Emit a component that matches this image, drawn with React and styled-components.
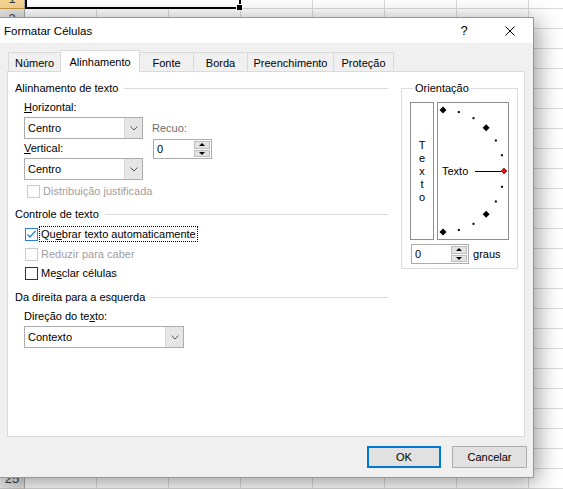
import React from 'react'
import styled, { createGlobalStyle } from 'styled-components'

const UI_FONT = '"Liberation Sans", Arial, sans-serif'

const GlobalStyle = createGlobalStyle`
  html, body {
    margin: 0;
    padding: 0;
    background: #fff;
    overflow: hidden;
  }
  body {
    font-family: ${UI_FONT};
    font-size: 11px;
    color: #000;
  }
`

const Screen = styled.div`
  position: relative;
  width: 563px;
  height: 489px;
  overflow: hidden;
  background: #fff;
`

/* spreadsheet behind the dialog */

const Sheet = styled.div`
  display: flex;
  flex-direction: column;
  margin-top: -11px;
`

const SheetRow = styled.div`
  display: grid;
  grid-template-columns: 25px repeat(8, 72px);
  height: 20px;
  flex: none;
`

const RowHead = styled.div`
  display: flex;
  align-items: center;
  justify-content: center;
  box-sizing: border-box;
  background: ${p => (p.$active ? '#f6d592' : '#e3e3e3')};
  border-right: 1px solid #ababab;
  border-bottom: 1px solid ${p => (p.$active ? '#c79b43' : '#c9c9c9')};
  color: #3a3a3a;
  font-size: 13px;
`

const Cell = styled.div`
  box-sizing: border-box;
  border-right: 1px solid #dadada;
  border-bottom: 1px solid #dadada;
`

const ActiveCell = styled.div`
  grid-column: span 3;
  position: relative;
  box-sizing: border-box;
  border: 2px solid #000;
`

const FillHandle = styled.span`
  position: absolute;
  right: -4px;
  bottom: -4px;
  width: 5px;
  height: 5px;
  background: #000;
  border: 1px solid #fff;
`

/* dialog */

const Dialog = styled.div`
  position: absolute;
  left: -2px;
  top: 17px;
  width: 536px;
  height: 461px;
  box-sizing: border-box;
  display: flex;
  flex-direction: column;
  border: 1px solid #5aa7e0;
  background: #f0f0f0;
  box-shadow: 3px 4px 22px rgba(0, 0, 0, 0.42);
`

const TitleBar = styled.div`
  display: flex;
  align-items: center;
  height: 25px;
  flex: none;
  background: #fff;
`

const Title = styled.div`
  flex: 1;
  padding-left: 5px;
  font-size: 11.5px;
`

const TitleButton = styled.div`
  width: 46px;
  height: 25px;
  display: flex;
  align-items: center;
  justify-content: center;
  font-size: 13px;
`

const Body = styled.div`
  flex: 1;
  display: flex;
  flex-direction: column;
  padding: 7px 6px 0 8px;
`

const TabStrip = styled.div`
  display: flex;
  align-items: flex-end;
  height: 21px;
  padding-left: 1px;
`

const Tab = styled.div`
  position: relative;
  z-index: ${p => (p.$active ? 1 : 0)};
  box-sizing: border-box;
  width: ${p => p.$w + 1}px;
  height: ${p => (p.$active ? 22 : 19)}px;
  margin-bottom: ${p => (p.$active ? -1 : 0)}px;
  margin-left: -1px;
  padding-top: ${p => (p.$active ? 0 : 2)}px;
  display: flex;
  align-items: center;
  justify-content: center;
  border: 1px solid #d9d9d9;
  border-bottom: none;
  background: ${p => (p.$active ? '#fff' : '#f0f0f0')};

  &:first-child {
    margin-left: 0;
  }
`

const Panel = styled.div`
  box-sizing: border-box;
  width: 518px;
  height: 366px;
  display: flex;
  align-items: flex-start;
  padding: 8px 0 0 7px;
  border: 1px solid #d9d9d9;
  background: #fff;
`

const ButtonRow = styled.div`
  display: flex;
  justify-content: flex-end;
  gap: 11px;
  margin-top: 9px;
`

const Button = styled.div`
  box-sizing: border-box;
  width: ${p => p.$w}px;
  height: 22px;
  display: flex;
  align-items: center;
  justify-content: center;
  background: #e1e1e1;
  border: ${p => (p.$primary ? '2px solid #0078d7' : '1px solid #adadad')};
`

/* left column of the Alinhamento tab */

const LeftCol = styled.div`
  width: 373px;
  display: flex;
  flex-direction: column;
`

const SectionHead = styled.div`
  display: flex;
  align-items: center;
  height: 16px;
  margin-top: ${p => p.$mt || 0}px;
  white-space: nowrap;

  &::after {
    content: '';
    flex: 1;
    height: 1px;
    margin-left: 6px;
    background: #dcdcdc;
  }
`

const Indent = styled.div`
  display: flex;
  flex-direction: column;
  padding-left: 9px;
`

const AlignGrid = styled.div`
  display: flex;
  align-items: flex-start;
`

const Stack = styled.div`
  display: flex;
  flex-direction: column;
  margin-left: ${p => p.$ml || 0}px;
`

const FieldLabel = styled.div`
  height: 16px;
  line-height: 16px;
  margin-top: ${p => p.$mt || 0}px;
  color: ${p => (p.$muted ? '#6d6d6d' : '#000')};
  white-space: nowrap;
`

const SelectBox = styled.div`
  box-sizing: border-box;
  width: ${p => p.$w}px;
  height: 22px;
  margin-top: 2px;
  display: flex;
  border: 1px solid #acacac;
  background: #fff;
`

const SelectValue = styled.span`
  flex: 1;
  display: flex;
  align-items: center;
  padding-left: 3px;
`

const DropButton = styled.span`
  width: 17px;
  display: flex;
  align-items: center;
  justify-content: center;
  background: #e6e6e6;
  border-left: 1px solid #d6d6d6;
`

const SpinBox = styled.div`
  box-sizing: border-box;
  width: ${p => p.$w}px;
  height: 20px;
  margin-top: ${p => p.$mt || 0}px;
  margin-left: 1px;
  display: flex;
  border: 1px solid #acacac;
  background: #fff;
`

const SpinValue = styled.span`
  flex: 1;
  display: flex;
  align-items: center;
  padding-left: 3px;
`

const SpinButtons = styled.span`
  width: 16px;
  margin: 1px;
  display: flex;
  flex-direction: column;
  gap: 1px;
`

const SpinButton = styled.span`
  flex: 1;
  display: flex;
  align-items: center;
  justify-content: center;
  background: #e3e3e3;
  border: 1px solid #bdbdbd;

  &::before {
    content: '';
    border-left: 3px solid transparent;
    border-right: 3px solid transparent;
    ${p => (p.$down ? 'border-top: 3px solid #000;' : 'border-bottom: 3px solid #000;')}
  }
`

const CheckRow = styled.div`
  display: flex;
  align-items: center;
  height: 16px;
  margin-top: ${p => p.$mt || 0}px;
  margin-left: ${p => p.$ml ?? 1}px;
  color: ${p => (p.$disabled ? '#a0a0a0' : '#000')};
  white-space: nowrap;
`

const Box = styled.span`
  box-sizing: border-box;
  width: 13px;
  height: 13px;
  flex: none;
  margin-right: 1px;
  display: flex;
  align-items: center;
  justify-content: center;
  background: #fff;
  border: 1px solid
    ${p => (p.$disabled ? '#cccccc' : p.$checked ? '#2c7fd2' : '#333333')};
`

const CheckText = styled.span`
  padding: 0 1px;
  line-height: 14px;
  border: 1px dotted ${p => (p.$focus ? '#000' : 'transparent')};
`

/* orientation group */

const OrientBox = styled.fieldset`
  box-sizing: border-box;
  width: 117px;
  min-width: 0;
  margin: 0 0 0 13px;
  padding: 0 8px 4px 8px;
  border: 1px solid #dcdcdc;
`

const OrientLegend = styled.legend`
  padding: 0 2px;
  margin-left: 3px;
  line-height: 16px;
`

const Dial = styled.div`
  display: flex;
  gap: 3px;
  margin-top: 6px;
`

const VerticalText = styled.div`
  box-sizing: border-box;
  width: 24px;
  height: 138px;
  display: flex;
  flex-direction: column;
  align-items: center;
  justify-content: center;
  line-height: 13px;
  border: 1px solid #8e8e8e;
`

const ArcBox = styled.div`
  box-sizing: border-box;
  width: 72px;
  height: 138px;
  border: 1px solid #8e8e8e;

  svg {
    display: block;
  }
`

const DegreeRow = styled.div`
  display: flex;
  align-items: center;
  margin-top: 4px;
`

const Unit = styled.span`
  margin-left: 4px;
`

function Chevron() {
  return (
    <svg width="8" height="5" viewBox="0 0 8 5">
      <polyline points="0.5,0.5 4,4 7.5,0.5" fill="none" stroke="#555" strokeWidth="1" />
    </svg>
  )
}

function Select({ value, width }) {
  return (
    <SelectBox $w={width}>
      <SelectValue>{value}</SelectValue>
      <DropButton>
        <Chevron />
      </DropButton>
    </SelectBox>
  )
}

function Spinner({ value, width, mt }) {
  return (
    <SpinBox $w={width} $mt={mt}>
      <SpinValue>{value}</SpinValue>
      <SpinButtons>
        <SpinButton />
        <SpinButton $down />
      </SpinButtons>
    </SpinBox>
  )
}

function Check({ children, checked, disabled, focus, mt, ml }) {
  return (
    <CheckRow $mt={mt} $ml={ml} $disabled={disabled}>
      <Box $checked={checked} $disabled={disabled}>
        {checked && (
          <svg width="11" height="11" viewBox="0 0 11 11">
            <polyline points="1.5,5.5 4,8 9.5,2" fill="none" stroke="#2c7fd2" strokeWidth="1.3" />
          </svg>
        )}
      </Box>
      <CheckText $focus={focus}>{children}</CheckText>
    </CheckRow>
  )
}

const ARC = { cx: 5, cy: 68, r: 61 }
const ANGLES = [90, 75, 60, 45, 30, 15, 0, -15, -30, -45, -60, -75, -90]

function diamond(x, y, s) {
  return `${x},${y - s} ${x + s},${y} ${x},${y + s} ${x - s},${y}`
}

function OrientationDial() {
  return (
    <svg width="70" height="136" viewBox="0 0 70 136">
      {ANGLES.map(a => {
        const rad = (a * Math.PI) / 180
        const x = ARC.cx + ARC.r * Math.cos(rad)
        const y = ARC.cy - ARC.r * Math.sin(rad)
        if (a === 0) {
          return <polygon key={a} points={diamond(x, y, 3)} fill="#e01010" stroke="#600" strokeWidth="0.6" />
        }
        if (a % 45 === 0) {
          return <polygon key={a} points={diamond(x, y, 3.5)} fill="#000" />
        }
        return <rect key={a} x={x - 1} y={y - 1} width="2" height="2" fill="#000" />
      })}
      <line x1="37" y1="68.5" x2="63" y2="68.5" stroke="#000" strokeWidth="1" />
      <text x="4" y="72" fontSize="11" fontFamily={UI_FONT}>Texto</text>
    </svg>
  )
}

const TABS = [
  { label: 'Número', w: 52 },
  { label: 'Alinhamento', w: 79, active: true },
  { label: 'Fonte', w: 54 },
  { label: 'Borda', w: 54 },
  { label: 'Preenchimento', w: 86 },
  { label: 'Proteção', w: 60 },
]

// rows 3..24 sit fully under the dialog, so their numbers are never seen
const ROWS = Array.from({ length: 25 }, (_, i) => i + 1)
const showLabel = n => n <= 2 || n === 25

export default function App() {
  return (
    <Screen>
      <GlobalStyle />
      <Sheet>
        {ROWS.map(n => (
          <SheetRow key={n}>
            <RowHead $active={n === 1}>{showLabel(n) ? n : null}</RowHead>
            {n === 1 ? (
              <>
                <ActiveCell>
                  <FillHandle />
                </ActiveCell>
                {[4, 5, 6, 7, 8].map(c => <Cell key={c} />)}
              </>
            ) : (
              [1, 2, 3, 4, 5, 6, 7, 8].map(c => <Cell key={c} />)
            )}
          </SheetRow>
        ))}
      </Sheet>

      <Dialog>
        <TitleBar>
          <Title>Formatar Células</Title>
          <TitleButton>?</TitleButton>
          <TitleButton>
            <svg width="10" height="10" viewBox="0 0 10 10">
              <path d="M0.5 0.5 L9.5 9.5 M9.5 0.5 L0.5 9.5" stroke="#000" strokeWidth="1" />
            </svg>
          </TitleButton>
        </TitleBar>

        <Body>
          <TabStrip>
            {TABS.map(t => (
              <Tab key={t.label} $w={t.w} $active={t.active}>{t.label}</Tab>
            ))}
          </TabStrip>

          <Panel>
            <LeftCol>
              <SectionHead>Alinhamento de texto</SectionHead>
              <Indent>
                <AlignGrid>
                  <Stack>
                    <FieldLabel $mt={3}><u>H</u>orizontal:</FieldLabel>
                    <Select value="Centro" width={119} />
                    <FieldLabel $mt={1}><u>V</u>ertical:</FieldLabel>
                    <Select value="Centro" width={119} />
                  </Stack>
                  <Stack $ml={9}>
                    <FieldLabel $mt={24} $muted>Recuo:</FieldLabel>
                    <Spinner value="0" width={59} mt={3} />
                  </Stack>
                </AlignGrid>
                <Check disabled mt={3} ml={3}>Distribuição justificada</Check>
              </Indent>

              <SectionHead $mt={7}>Controle de texto</SectionHead>
              <Indent>
                <Check checked focus mt={4}>Qu<u>e</u>brar texto automaticamente</Check>
                <Check disabled mt={4}>Reduzir para caber</Check>
                <Check mt={3}>Me<u>s</u>clar células</Check>
              </Indent>

              <SectionHead $mt={8}>Da direita para a esquerda</SectionHead>
              <Indent>
                <FieldLabel $mt={3}>Direção do te<u>x</u>to:</FieldLabel>
                <Select value="Contexto" width={160} />
              </Indent>
            </LeftCol>

            <OrientBox>
              <OrientLegend>Orientação</OrientLegend>
              <Dial>
                <VerticalText>
                  {'Texto'.split('').map((ch, i) => <span key={i}>{ch}</span>)}
                </VerticalText>
                <ArcBox>
                  <OrientationDial />
                </ArcBox>
              </Dial>
              <DegreeRow>
                <Spinner value="0" width={58} />
                <Unit><u>g</u>raus</Unit>
              </DegreeRow>
            </OrientBox>
          </Panel>

          <ButtonRow>
            <Button $w={74} $primary>OK</Button>
            <Button $w={75}>Cancelar</Button>
          </ButtonRow>
        </Body>
      </Dialog>
    </Screen>
  )
}
